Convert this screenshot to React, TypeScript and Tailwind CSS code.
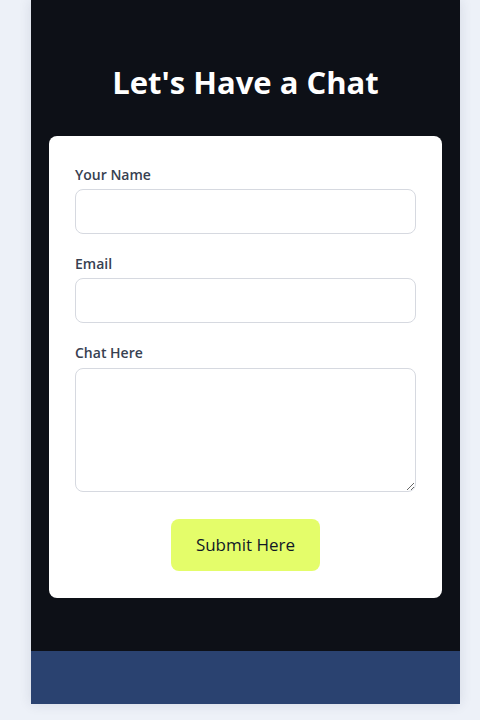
import React from 'react';

const fields = [
    { id: 'name', label: 'Your Name', type: 'text', gap: 'mb-[20px]' },
    { id: 'email', label: 'Email', type: 'email', gap: 'mb-[20px]' },
];

export default function App() {
    return (
        <div className="min-h-[720px] bg-[#edf1f8] font-['Open_Sans',sans-serif]">
            <div className="ml-[31px] w-[429px] shadow-[0_0_12px_rgba(30,40,70,0.12)]">
                <section className="bg-[#0d1017] px-[18px] pt-[60px] pb-[53px]">
                    <h1 className="text-center text-[31px] font-bold leading-[44px] text-white">Let's Have a Chat</h1>
                    <form
                        onSubmit={(e) => e.preventDefault()}
                        className="mt-[32px] flex flex-col rounded-lg bg-white px-[26px] pt-[29px] pb-[27px]"
                    >
                        {fields.map((f) => (
                            <div key={f.id} className={`${f.gap} flex flex-col`}>
                                <label htmlFor={f.id} className="mb-[4px] text-[14px] font-semibold leading-5 text-[#374151]">
                                    {f.label}
                                </label>
                                <input
                                    id={f.id}
                                    type={f.type}
                                    className="h-[45px] rounded-lg border border-[#d6d9e0] px-3 outline-none"
                                />
                            </div>
                        ))}
                        <div className="flex flex-col">
                            <label htmlFor="chat" className="mb-[5px] text-[14px] font-semibold leading-5 text-[#374151]">
                                Chat Here
                            </label>
                            <textarea id="chat" className="h-[124px] rounded-lg border border-[#d6d9e0] px-3 py-2 outline-none" />
                        </div>
                        <button
                            type="submit"
                            className="mx-auto mt-[27px] h-[52px] w-[149px] rounded-lg bg-[#e4fd6a] text-[17px] text-[#111827]"
                        >
                            Submit Here
                        </button>
                    </form>
                </section>
                <footer className="h-[53px] bg-[#2a4270]" />
            </div>
        </div>
    );
}
